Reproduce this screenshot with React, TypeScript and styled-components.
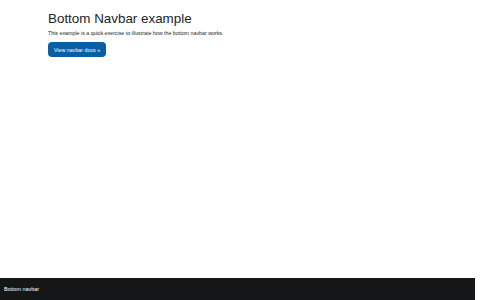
import React from "react";
import styled, { createGlobalStyle } from "styled-components";

const Global = createGlobalStyle`
  html, body { margin: 0; padding: 0; background: #fff; }
  body { font-family: "Liberation Sans", Arial, sans-serif; color: #212529; }
`;

const Page = styled.div`
  width: 475px;
  height: 300px;
  display: flex;
  flex-direction: column;
`;

const Main = styled.main`
  flex: 1;
  padding: 11px 0 0 48px;
  display: flex;
  flex-direction: column;
  align-items: flex-start;
`;

const Title = styled.h1`
  margin: 0 0 3px;
  font-size: 13.4px;
  font-weight: 400;
  line-height: 1.2;
  color: #212529;
`;

const Lead = styled.p`
  margin: 0 0 4px;
  font-size: 5.3px;
  line-height: 1.5;
  color: #212529;
`;

const Button = styled.a`
  display: flex;
  align-items: center;
  height: 15px;
  padding: 0 6px;
  border-radius: 4px;
  background: #0a5fa3;
  color: #fff;
  font-size: 5.3px;
  text-decoration: none;
`;

const Navbar = styled.nav`
  height: 22px;
  background: #151618;
  display: flex;
  align-items: center;
  padding: 0 4px;
  color: #fff;
  font-size: 5.4px;
`;

export default function App() {
  return (
    <>
      <Global />
      <Page>
        <Main>
          <Title>Bottom Navbar example</Title>
          <Lead>This example is a quick exercise to illustrate how the bottom navbar works.</Lead>
          <Button href="#">View navbar docs »</Button>
        </Main>
        <Navbar>Bottom navbar</Navbar>
      </Page>
    </>
  );
}
